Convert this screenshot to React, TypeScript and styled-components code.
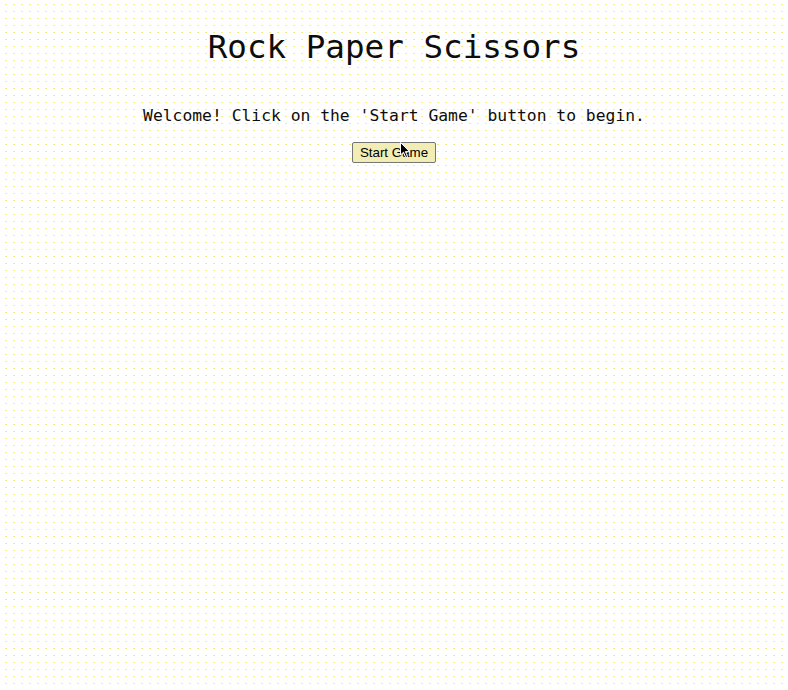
import styled, { createGlobalStyle } from "styled-components";

const GlobalStyle = createGlobalStyle`
  html, body {
    margin: 0;
    padding: 0;
    min-height: 100%;
  }

  body {
    background-color: #ffffff;
    background-image: radial-gradient(circle, #f6ec7a 0.5px, transparent 0.8px);
    background-size: 8px 7px;
    background-position: 2px 1px;
    font-family: "DejaVu Sans Mono", "Liberation Mono", monospace;
    color: #0d0d0d;
  }
`;

const Page = styled.main`
  min-height: 690px;
  padding: 8px;
  box-sizing: border-box;
  text-align: center;
`;

const Title = styled.h1`
  margin: 21px 0 0;
  font-size: 32.6px;
  font-weight: 400;
  line-height: 37px;
`;

const Message = styled.p`
  margin: 40px 0 0;
  font-size: 16.35px;
  line-height: 19px;
`;

const ButtonWrap = styled.div`
  position: relative;
  display: inline-block;
  margin-top: 17px;
`;

const StartButton = styled.button`
  height: 21px;
  padding: 1px 7px;
  font-family: "Liberation Sans", Arial, sans-serif;
  font-size: 13.33px;
  color: #000;
  background: #f1edb4;
  border: 1px solid #767676;
  border-radius: 2px;
  cursor: pointer;
`;

const Cursor = styled.svg`
  position: absolute;
  left: 48px;
  top: 0px;
  width: 11px;
  height: 17px;
  pointer-events: none;
`;

export default function App() {
  return (
    <>
      <GlobalStyle />
      <Page>
        <Title>Rock Paper Scissors</Title>
        <Message>Welcome! Click on the 'Start Game' button to begin.</Message>
        <ButtonWrap>
          <StartButton>Start Game</StartButton>
          <Cursor viewBox="0 0 11 17">
            <path
              d="M0.5 0.5 L0.5 13 L3.5 10.2 L5.8 15.5 L7.6 14.7 L5.4 9.6 L9.5 9.6 Z"
              fill="#000"
              stroke="#fff"
              strokeWidth="1"
              strokeLinejoin="round"
            />
          </Cursor>
        </ButtonWrap>
      </Page>
    </>
  );
}
